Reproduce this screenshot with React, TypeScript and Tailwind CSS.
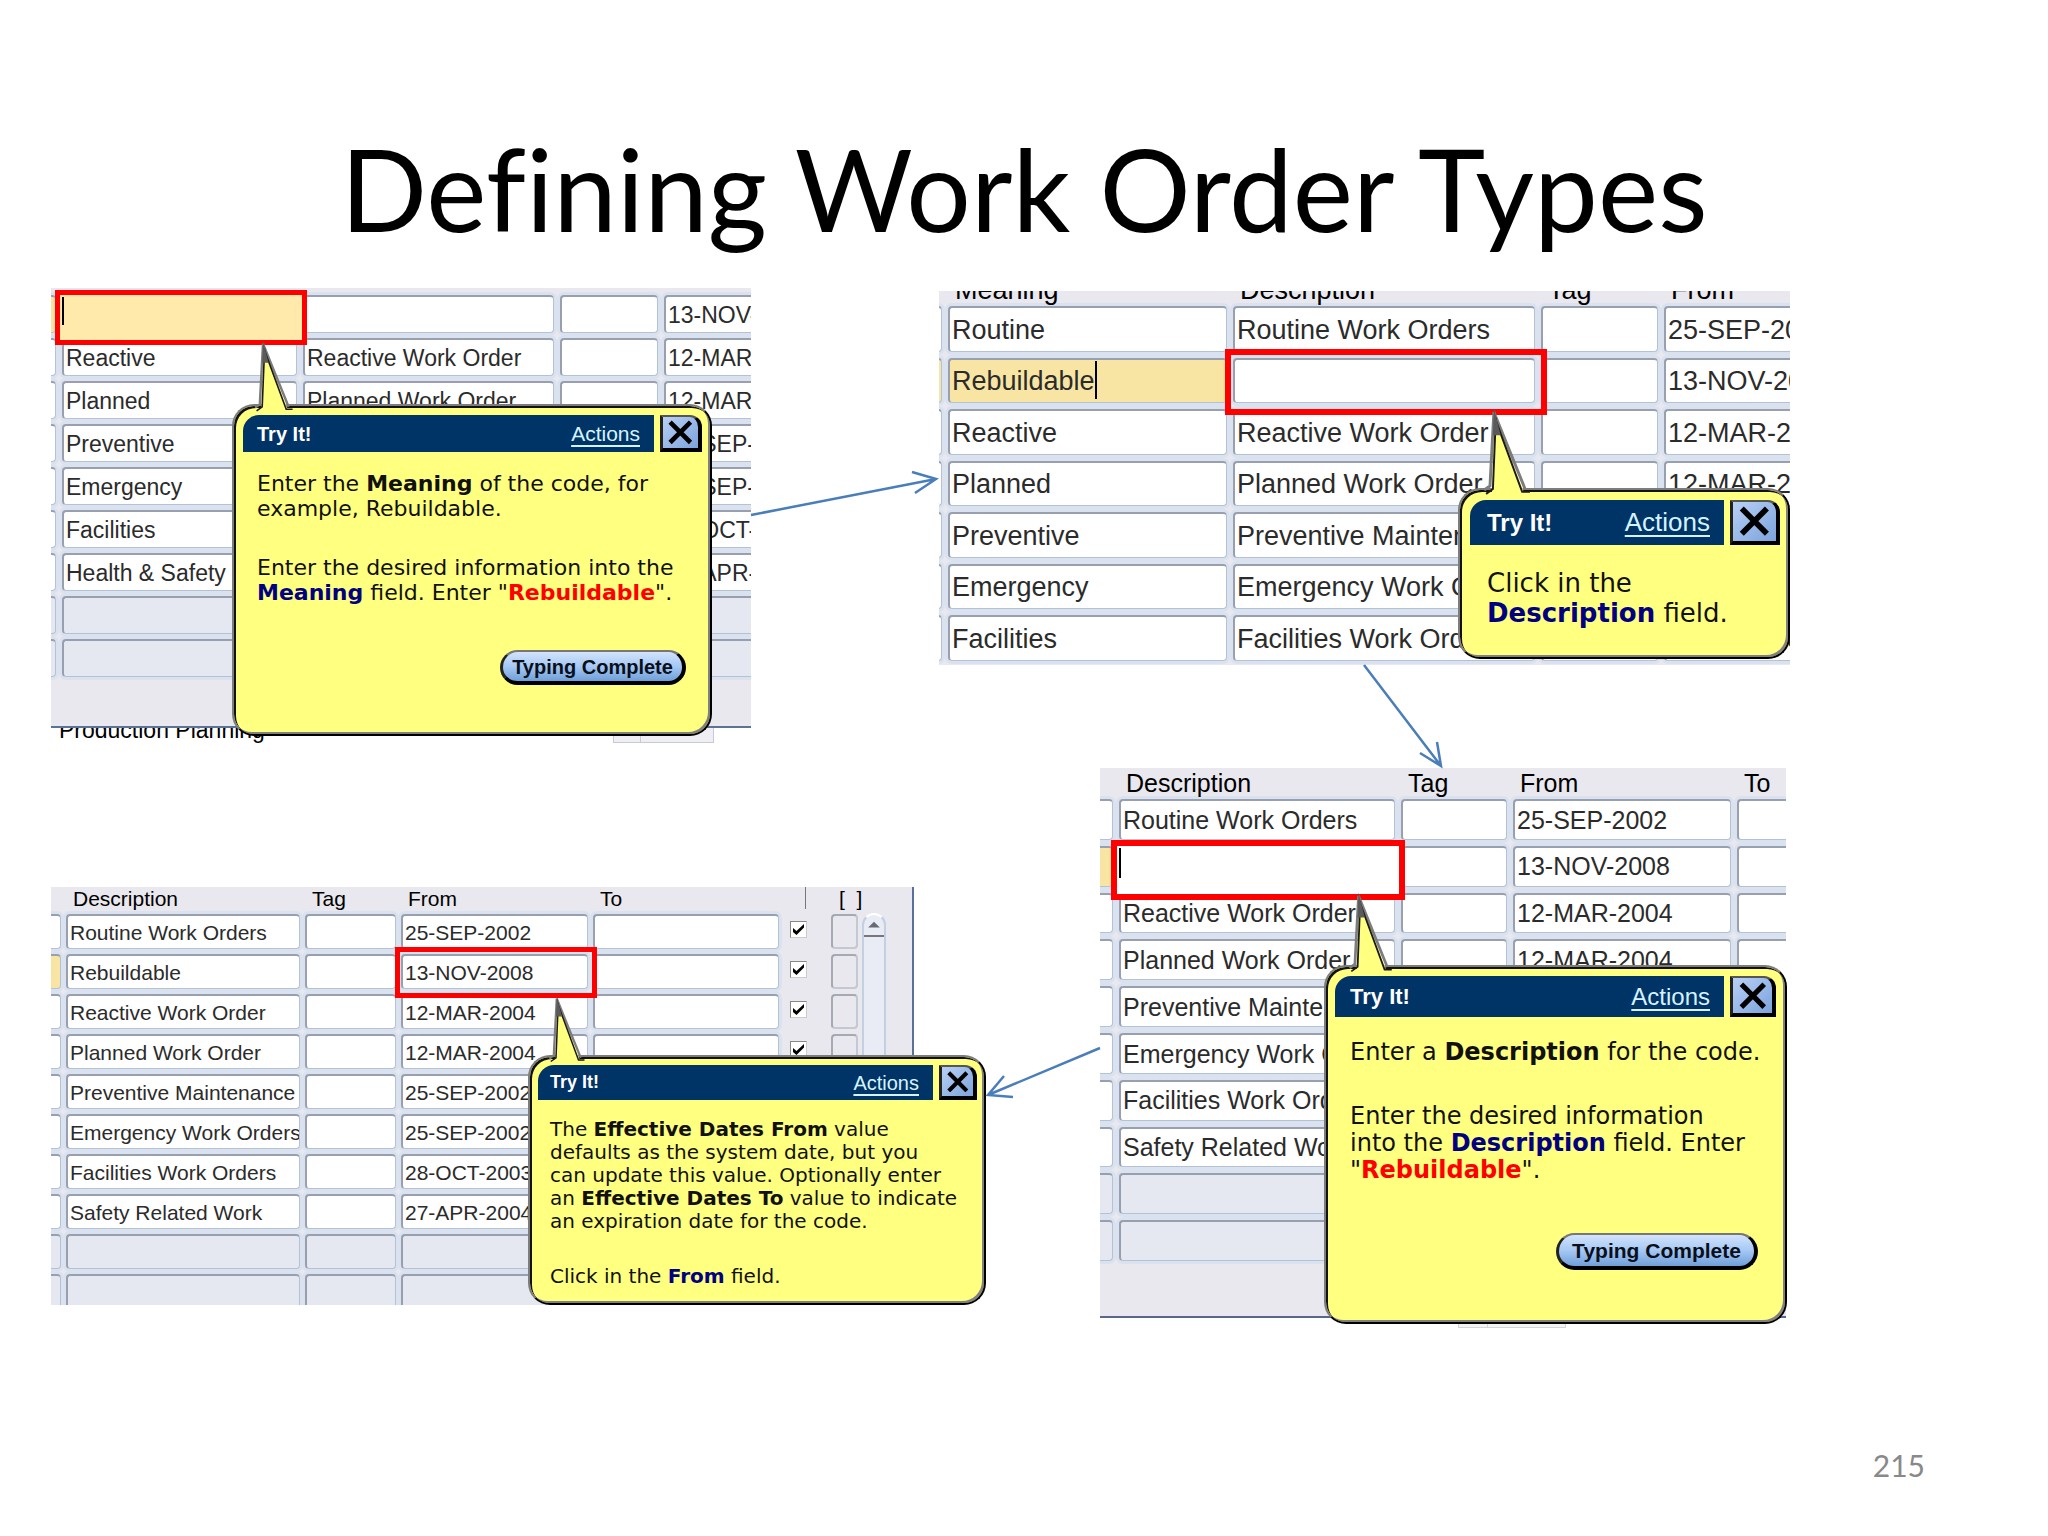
import type { ReactNode } from 'react';
import clsx from 'clsx';

type Row = { cells: string[]; active?: boolean; empty?: boolean };

const dates: Record<string, string> = {
  Routine: '25-SEP-2002',
  Rebuildable: '13-NOV-2008',
  Reactive: '12-MAR-2004',
  Planned: '12-MAR-2004',
  Preventive: '25-SEP-2002',
  Emergency: '25-SEP-2002',
  Facilities: '28-OCT-2003',
  'Health & Safety': '27-APR-2004',
};

const meaningRows: Row[] = [
  { cells: ['', '', '', dates.Rebuildable], active: true },
  { cells: ['Reactive', 'Reactive Work Order', '', dates.Reactive] },
  { cells: ['Planned', 'Planned Work Order', '', dates.Planned] },
  { cells: ['Preventive', 'Preventive Maintenance', '', dates.Preventive] },
  { cells: ['Emergency', 'Emergency Work Orders', '', dates.Emergency] },
  { cells: ['Facilities', 'Facilities Work Orders', '', dates.Facilities] },
  { cells: ['Health & Safety', 'Safety Related Work', '', dates['Health & Safety']] },
  { cells: ['', '', '', ''], empty: true },
  { cells: ['', '', '', ''], empty: true },
];

const clickRows: Row[] = [
  { cells: ['Routine', 'Routine Work Orders', '', dates.Routine] },
  { cells: ['Rebuildable', '', '', dates.Rebuildable], active: true },
  { cells: ['Reactive', 'Reactive Work Order', '', dates.Reactive] },
  { cells: ['Planned', 'Planned Work Order', '', dates.Planned] },
  { cells: ['Preventive', 'Preventive Maintenance', '', dates.Preventive] },
  { cells: ['Emergency', 'Emergency Work Orders', '', dates.Emergency] },
  { cells: ['Facilities', 'Facilities Work Orders', '', dates.Facilities] },
];

// Description / Tag / From / To rows, used by the last two steps
const dateRows = (second: string): Row[] => [
  { cells: ['Routine Work Orders', '', dates.Routine, ''] },
  { cells: [second, '', dates.Rebuildable, ''], active: true },
  { cells: ['Reactive Work Order', '', dates.Reactive, ''] },
  { cells: ['Planned Work Order', '', dates.Planned, ''] },
  { cells: ['Preventive Maintenance', '', dates.Preventive, ''] },
  { cells: ['Emergency Work Orders', '', dates.Emergency, ''] },
  { cells: ['Facilities Work Orders', '', dates.Facilities, ''] },
  { cells: ['Safety Related Work', '', dates['Health & Safety'], ''] },
  { cells: ['', '', '', ''], empty: true },
  { cells: ['', '', '', ''], empty: true },
];

const cellBase =
  'rounded-[4px] border-t-2 border-l-2 border-r border-b border-t-[#98a0b0] border-l-[#98a0b0] border-r-[#b4c2d6] border-b-[#b4c2d6] shadow-[0_0_0_3px_#dbe2ef] p-0';

type GridProps = {
  name: string;
  headers: string[];
  showHead?: boolean;
  cols: string[];
  rows: Row[];
  activeCell?: number;
  checks?: boolean;
  className: string;
};

function FormGrid({ name, headers, showHead = true, cols, rows, activeCell, checks, className }: GridProps) {
  return (
    <table className={clsx('table-fixed border-separate text-[#2b2b2b]', className)} aria-label={name}>
      <colgroup>
        <col className="w-5" />
        {cols.map((c, i) => (
          <col key={i} className={c} />
        ))}
        {checks && <col className="w-[42px]" />}
        {checks && <col className="w-[27px]" />}
      </colgroup>
      {showHead && (
        <thead>
          <tr className="h-8">
            <th className="p-0" />
            {headers.map((h) => (
              <th key={h} className="p-0 pl-[7px] text-left align-bottom leading-5 font-normal text-black">
                {h}
              </th>
            ))}
            {checks && (
              <th className="p-0">
                <span className="ml-[21px] block h-8 w-px bg-[#777]" />
              </th>
            )}
            {checks && (
              <th className="p-0 pl-2 text-left align-bottom leading-5 font-normal whitespace-pre text-black">[  ]</th>
            )}
          </tr>
        </thead>
      )}
      <tbody>
        {rows.map((row, r) => (
          <tr key={r}>
            <td className={clsx(cellBase, row.active ? 'bg-[#f8e5a4]' : row.empty ? 'bg-[#e6e8f1]' : 'bg-white')} />
            {row.cells.map((text, c) => (
              <td
                key={c}
                className={clsx(
                  cellBase,
                  row.empty ? 'bg-[#e6e8f1]' : row.active && activeCell === c ? 'bg-[#f8e5a4]' : 'bg-white',
                )}
              >
                <input
                  type="text"
                  aria-label={`${headers[c]} ${r + 1}`}
                  defaultValue={text}
                  disabled={row.empty}
                  className="block h-[31px] w-full bg-transparent pt-px pl-[2px] outline-none"
                />
              </td>
            ))}
            {checks && (
              <td className="p-0 pb-1 pl-[6px]">
                {!row.empty && (
                  <label className="relative block size-[17px]">
                    <input
                      type="checkbox"
                      defaultChecked
                      aria-label={`Enabled ${r + 1}`}
                      className="block size-[17px] appearance-none border border-t-[#888] border-l-[#888] border-r-[#ccc] border-b-[#ccc] bg-white"
                    />
                    <svg viewBox="0 0 17 17" className="absolute inset-0 size-full">
                      <path d="M3 7 L6.5 10 L14 3 V6.5 L6.5 14 L3 11 Z" fill="#000" />
                    </svg>
                  </label>
                )}
              </td>
            )}
            {checks && (
              <td className="rounded-[4px] border-2 border-t-[#a5a9b4] border-r-[#c4c8d2] border-b-[#c4c8d2] border-l-[#a5a9b4] bg-[#e8e8ee] p-0" />
            )}
          </tr>
        ))}
      </tbody>
    </table>
  );
}

type CalloutProps = {
  // box position and size
  className: string;
  tail: string;
  bar: string;
  pad: string;
  title: string;
  link: string;
  close: string;
  body: string;
  children: ReactNode;
};

function Callout({ className, tail, bar, pad, title, link, close, body, children }: CalloutProps) {
  return (
    <section
      className={clsx(
        'absolute rounded-[22px] border-2 border-t-[#7d7d7d] border-r-black border-b-black border-l-[#7d7d7d] bg-[#ffff80] shadow-[inset_2px_2px_0_#111,inset_-2px_-2px_0_#808080]',
        className,
      )}
    >
      <svg viewBox="0 0 40 88" className={clsx('absolute bottom-full -mb-[6px] overflow-visible', tail)}>
        <path d="M6 6 L3 82 L3 90 H35 V82 Z" fill="#ffff80" />
        <path d="M5 2 L1 78 L-5 82 M5 2 L37 81" fill="none" stroke="#7d7d7d" strokeWidth="3" />
        <path d="M7 8 L4 81 L-3 86 M6 8 L34 84 H42" fill="none" stroke="#1a1a1a" strokeWidth="2" />
        <path d="M5 -2 L4 26 L12 26 Z" fill="#5a5a5a" />
      </svg>
      <header className={clsx('flex gap-[6px]', bar)}>
        <div className={clsx('flex flex-1 items-center justify-between rounded-tl-[16px] bg-[#003366] pr-[14px] text-white', pad)}>
          <h2 className={clsx('font-bold', title)}>Try It!</h2>
          <a href="#actions" className={clsx('text-[#d5f3ff] underline underline-offset-4', link)}>
            Actions
          </a>
        </div>
        <button
          type="button"
          aria-label="Close"
          className={clsx(
            'flex items-center justify-center rounded-tr-[12px] border-t-2 border-r-4 border-b-4 border-l-3 border-t-[#555] border-r-black border-b-black border-l-[#222] bg-linear-to-br from-[#b9d0f5] to-[#7ba3dc]',
            close,
          )}
        >
          <svg viewBox="0 0 26 24" className="w-[76%]">
            <path d="M3 2 L23 22 M23 2 L3 22" stroke="#000" strokeWidth="4.5" />
          </svg>
        </button>
      </header>
      <div className={clsx('flex flex-col whitespace-nowrap text-[#111]', pad, body)}>{children}</div>
    </section>
  );
}

function TypingComplete({ className }: { className: string }) {
  return (
    <button
      type="button"
      className={clsx(
        'self-end rounded-full border-t-2 border-r-4 border-b-4 border-l-3 border-t-[#777] border-r-black border-b-black border-l-[#222] bg-linear-to-b from-[#d3e3fb] via-[#a5c8f4] to-[#6f9fd8] font-["Liberation_Sans",Arial,sans-serif] leading-none font-bold text-[#0b0f1a]',
        className,
      )}
    >
      Typing Complete
    </button>
  );
}

const Field = ({ children }: { children: ReactNode }) => <b className="text-[#000080]">{children}</b>;
const Typed = ({ children }: { children: ReactNode }) => <b className="text-[#ff0000]">{children}</b>;

function MeaningStep() {
  return (
    <figure className="relative w-full max-w-[700px] text-[23px]">
      <div className="h-[440px] overflow-hidden border-b-2 border-[#5d7396] bg-[#e8e8ee]">
        <FormGrid
          name="Enter the meaning"
          headers={['Meaning', 'Description', 'Tag', 'From']}
          showHead={false}
          cols={['w-[235px]', 'w-[251px]', 'w-[98px]', 'w-[180px]']}
          rows={meaningRows}
          activeCell={0}
          className="mt-[2px] -ml-[21px] h-[392px] w-[820px] border-spacing-x-[6px] border-spacing-y-[5px]"
        />
      </div>
      <div className="flex h-[15px] items-end overflow-hidden pl-2">
        <p className="flex-1 leading-[26px]">Production Planning</p>
        <div className="mr-[37px] flex h-full w-[101px] border border-t-0 border-[#c5cad8] bg-[#eeeef3]">
          <span className="w-[27px] border-r border-[#c5cad8]" />
        </div>
      </div>
      <div className="absolute top-[2px] left-1 h-[55px] w-[252px] border-5 border-[#ff0000] bg-[#ffe9ab]">
        <span className="absolute top-[2px] left-[2px] h-7 w-[2px] bg-black" />
      </div>
      <Callout
        className="top-[116px] left-[181px] h-[332px] w-[480px] p-[9px] pr-2"
        tail="left-[25px] w-8"
        bar="h-[37px]"
        pad="pl-[14px]"
        title="text-[20px]"
        link="text-[21px]"
        close="w-[42px]"
        body="mt-[19px] gap-[34px] text-[22px] leading-[25px] font-['DejaVu_Sans',Verdana,sans-serif]"
      >
        <p>
          Enter the <b>Meaning</b> of the code, for
          <br />
          example, Rebuildable.
        </p>
        <p>
          Enter the desired information into the
          <br />
          <Field>Meaning</Field> field. Enter "<Typed>Rebuildable</Typed>".
        </p>
        <TypingComplete className="mt-[11px] mr-4 h-[35px] w-[186px] text-[20px]" />
      </Callout>
    </figure>
  );
}

function ClickDescriptionStep() {
  return (
    <figure className="relative w-full text-[27px]">
      <div className="h-[374px] overflow-hidden bg-[#e8e8ee]">
        <FormGrid
          name="Click in the description"
          headers={['Meaning', 'Description', 'Tag', 'From']}
          cols={['w-[279px]', 'w-[302px]', 'w-[117px]', 'w-[220px]']}
          rows={clickRows}
          activeCell={0}
          className="-mt-[29px] -ml-[23px] h-[405px] w-[974px] border-spacing-[6px]"
        />
      </div>
      <span className="absolute top-[70px] left-[156px] h-[38px] w-[2px] bg-black" />
      <div className="absolute top-[58px] left-[286px] h-[66px] w-[322px] border-6 border-[#ff0000]" />
      <Callout
        className="top-[197px] left-[519px] h-[171px] w-[332px] p-[10px] pr-2"
        tail="left-[29px] w-[39px]"
        bar="h-[45px]"
        pad="pl-[17px]"
        title="text-[24px]"
        link="text-[26px]"
        close="w-[50px]"
        body="mt-[23px] text-[26px] leading-[30px] font-['DejaVu_Sans',Verdana,sans-serif]"
      >
        <p>
          Click in the
          <br />
          <Field>Description</Field> field.
        </p>
      </Callout>
    </figure>
  );
}

function EnterDescriptionStep() {
  return (
    <figure className="relative w-full max-w-[686px] text-[25px]">
      <div className="h-[550px] overflow-hidden border-b-2 border-[#5a6690] bg-[#e8e8ee]">
        <FormGrid
          name="Enter the description"
          headers={['Description', 'Tag', 'From', 'To']}
          cols={['w-[276px]', 'w-[106px]', 'w-[218px]', 'w-[200px]']}
          rows={dateRows('')}
          className="-mt-[13px] -ml-[13px] h-[512px] w-[856px] border-spacing-[6px]"
        />
      </div>
      <div className="ml-[358px] flex h-[10px] w-[108px] border border-t-0 border-[#d5d5d5] bg-[#f4f4f4]">
        <span className="w-[29px] border-r border-[#d5d5d5]" />
      </div>
      <div className="absolute top-[72px] left-[11px] h-[60px] w-[294px] border-6 border-[#ff0000] bg-white">
        <span className="absolute top-[2px] left-[2px] h-[30px] w-[2px] bg-black" />
      </div>
      <Callout
        className="top-[197px] left-[224px] h-[359px] w-[463px] p-[9px]"
        tail="left-[28px] w-9"
        bar="h-[41px]"
        pad="pl-[15px]"
        title="text-[22px]"
        link="text-[24px]"
        close="w-[46px]"
        body="mt-[22px] gap-[37px] text-[24px] leading-[27px] font-['DejaVu_Sans',Verdana,sans-serif]"
      >
        <p>
          Enter a <b>Description</b> for the code.
        </p>
        <p>
          Enter the desired information
          <br />
          into the <Field>Description</Field> field. Enter
          <br />"<Typed>Rebuildable</Typed>".
        </p>
        <TypingComplete className="mt-[12px] mr-[18px] h-[37px] w-[202px] text-[21px]" />
      </Callout>
    </figure>
  );
}

function ClickFromStep() {
  return (
    <figure className="relative w-full text-[21px]">
      <div className="relative h-[418px] overflow-hidden border-r-2 border-[#5a6f9a] bg-[#e8e8ee]">
        <FormGrid
          name="Click in the from date"
          headers={['Description', 'Tag', 'From', 'To']}
          cols={['w-[234px]', 'w-[91px]', 'w-[187px]', 'w-[186px]']}
          rows={dateRows('Rebuildable')}
          checks
          className="-mt-[15px] -ml-[15px] h-[442px] w-[827px] border-spacing-[5px]"
        />
        <div className="absolute top-[26px] left-[811px] flex h-[400px] w-6 flex-col items-center rounded-t-[12px] border-2 border-[#c3cfe2] border-t-white bg-[#e9ebf5]">
          <svg viewBox="0 0 24 24" className="h-[22px] w-5 border-b-2 border-[#777]">
            <path d="M5 15 L12 8 L19 15 Z" fill="#666a75" />
          </svg>
        </div>
      </div>
      <div className="absolute top-[60px] left-[344px] h-[51px] w-[202px] border-5 border-[#ff0000]" />
      <Callout
        className="top-[168px] left-[477px] h-[250px] w-[458px] p-2 pr-[7px]"
        tail="left-[23px] w-[30px]"
        bar="h-[35px]"
        pad="pl-3"
        title="text-[18px]"
        link="text-[20px]"
        close="w-[38px]"
        body="mt-[18px] gap-[32px] text-[20px] leading-[23px] font-['DejaVu_Sans',Verdana,sans-serif]"
      >
        <p>
          The <b>Effective Dates From</b> value
          <br />
          defaults as the system date, but you
          <br />
          can update this value. Optionally enter
          <br />
          an <b>Effective Dates To</b> value to indicate
          <br />
          an expiration date for the code.
        </p>
        <p>
          Click in the <Field>From</Field> field.
        </p>
      </Callout>
    </figure>
  );
}

function Arrows() {
  return (
    <svg
      viewBox="0 0 2048 1536"
      className="pointer-events-none absolute inset-0 h-full w-full"
      fill="none"
      stroke="#4a7ebb"
      strokeWidth="2.5"
    >
      <path d="M751 515 L936 479 M915 493 L936 479 L912 472" />
      <path d="M1364 665 L1441 766 M1420 753 L1441 766 L1437 742" />
      <path d="M1100 1048 L988 1095 M1004 1076 L988 1095 L1013 1097" />
    </svg>
  );
}

export default function App() {
  return (
    <main className="relative flex min-h-screen flex-col bg-white font-['Liberation_Sans',Arial,sans-serif]">
      <h1 className="pt-[122px] text-center font-['Lato',Calibri,sans-serif] text-[114px] leading-[132px] text-black [font-variant-ligatures:none]">
        Defining Work Order Types
      </h1>
      <div className="mt-[34px] flex justify-between pr-[258px] pl-[51px]">
        <div className="flex w-[863px] flex-col gap-36">
          <MeaningStep />
          <ClickFromStep />
        </div>
        <div className="mt-[3px] flex w-[851px] flex-col gap-[103px]">
          <ClickDescriptionStep />
          <div className="pl-[161px]">
            <EnterDescriptionStep />
          </div>
        </div>
      </div>
      <footer className="mt-auto pr-[123px] pb-[54px] text-right font-['Lato',Calibri,sans-serif] text-[30px] leading-[34px] text-[#898989]">
        215
      </footer>
      <Arrows />
    </main>
  );
}
